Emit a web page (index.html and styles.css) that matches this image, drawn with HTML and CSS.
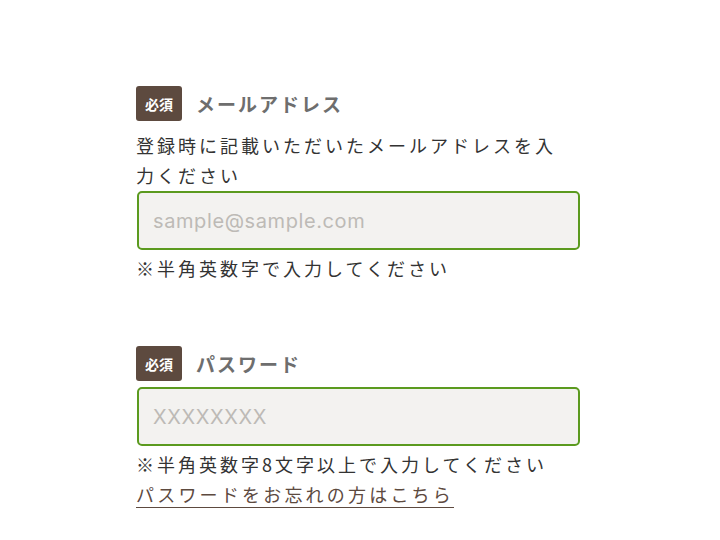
FILE: index.html
```html
<!DOCTYPE html>
<html lang="ja">
<head>
  <meta charset="UTF-8">
  <meta name="viewport" content="width=device-width, initial-scale=1.0">
  <title>ログイン</title>
  <link rel="stylesheet" href="styles.css">
</head>
<body>
  <form class="login-form">
    <div class="field">
      <div class="field-head">
        <span class="badge">必須</span>
        <label class="field-label" for="email">メールアドレス</label>
      </div>
      <p class="field-desc">登録時に記載いただいたメールアドレスを入力ください</p>
      <input type="text" id="email" class="text-input" placeholder="sample@sample.com">
      <p class="field-note">※半角英数字で入力してください</p>
    </div>

    <div class="field">
      <div class="field-head">
        <span class="badge">必須</span>
        <label class="field-label" for="password">パスワード</label>
      </div>
      <input type="password" id="password" class="text-input" placeholder="XXXXXXXX">
      <p class="field-note">※半角英数字8文字以上で入力してください</p>
      <a class="forgot-link" href="#">パスワードをお忘れの方はこちら</a>
    </div>
  </form>
</body>
</html>
```

FILE: styles.css
```css
body {
  margin: 0;
  padding: 86px 0 0 136px;
  background-color: #fff;
  color: #333;
  font-family: "Noto Sans CJK JP", "Noto Sans", sans-serif;
}
.login-form {
  width: 443px;
}
.field {
  margin-bottom: 63px;
}
.field:last-child {
  margin-bottom: 0;
}
.field-head {
  display: flex;
  align-items: center;
  height: 35px;
  margin-bottom: 6px;
}
.badge {
  display: flex;
  align-items: center;
  justify-content: center;
  width: 46px;
  height: 35px;
  border-radius: 3px;
  background-color: #5d4a3f;
  color: #fff;
  font-size: 14px;
  font-weight: bold;
}
.field-label {
  margin-left: 14px;
  font-size: 19px;
  font-weight: bold;
  letter-spacing: 2px;
  color: #6e6e6e;
}
.field-desc,
.field-note {
  margin: 0;
  font-size: 18px;
  line-height: 30px;
  letter-spacing: 3px;
  color: #333;
}
.field-desc {
  width: 430px;
  margin-top: 9px;
  margin-bottom: 1px;
}
.text-input {
  display: block;
  box-sizing: border-box;
  width: 443px;
  height: 59px;
  margin: 0 0 0 1px;
  padding: 0 14px;
  border: 2px solid #5b9a1f;
  border-radius: 5px;
  background-color: #f3f2f0;
  font-family: "Inter", "Noto Sans", sans-serif;
  font-size: 20px;
  color: #333;
  letter-spacing: 0.6px;
}
.text-input::placeholder {
  color: #bdbab6;
}
.field-note {
  margin-top: 3px;
}
.forgot-link {
  font-size: 18px;
  line-height: 30px;
  letter-spacing: 3.2px;
  color: #5d4a3f;
  text-decoration: underline;
  text-underline-offset: 5px;
}
```
